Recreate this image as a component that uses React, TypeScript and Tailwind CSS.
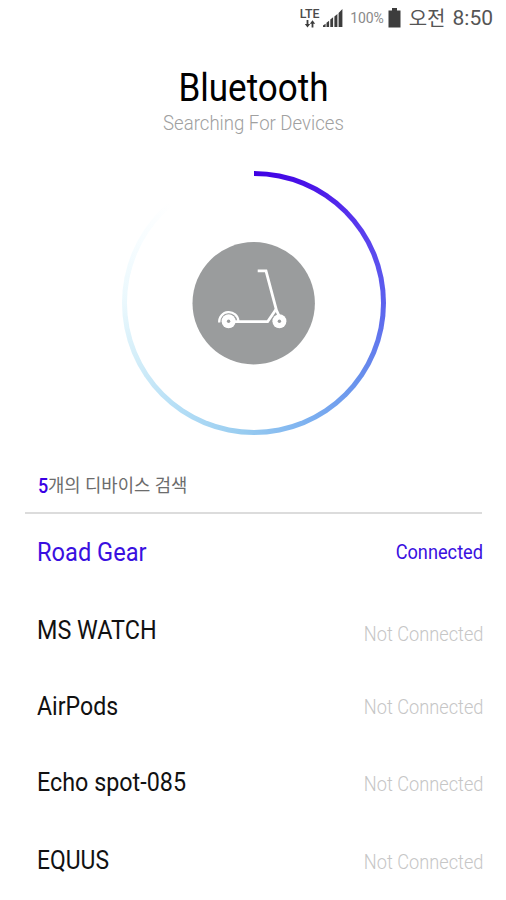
type Device = { name: string; connected: boolean; nameClass: string; statusClass: string };

const devices: Device[] = [
  { name: "Road Gear", connected: true, nameClass: "scale-x-[0.945]", statusClass: "pb-px" },
  { name: "MS WATCH", connected: false, nameClass: "pt-[2px] scale-x-[0.935]", statusClass: "pt-[8px]" },
  { name: "AirPods", connected: false, nameClass: "pt-[1px] scale-x-[0.925]", statusClass: "pt-px" },
  { name: "Echo spot-085", connected: false, nameClass: "pb-[2px] scale-x-[0.933]", statusClass: "pt-px" },
  { name: "EQUUS", connected: false, nameClass: "scale-x-[0.915]", statusClass: "pt-[2px]" },
];

function StatusBar() {
  return (
    <header className="flex h-9 items-center justify-end pr-3 text-[#4a4a4a]">
      <div className="mr-[2px] flex w-[21px] flex-col items-center">
        <span className="scale-x-[1.03] text-[12px] leading-[11px] font-medium">LTE</span>
        <svg className="h-[8px] w-[12px]" viewBox="0 0 12 8" fill="#3c3c3c">
          <path d="M2.6 0h1.8v4h1.8L3.5 7.5.8 4h1.8zM7.6 7.5h1.8V3.7h1.8L8.5.2 5.8 3.7h1.8z" />
        </svg>
      </div>
      <svg className="ml-[1px] h-[20px] w-[20px]" viewBox="0 0 20 20" fill="#3c3c3c">
        <path d="M0 19v-1.5l2.6-1.8V19zM3.5 19v-4.2l2.6-2V19zM7.3 19v-7.4l2.8-2.4V19zM11.4 19V8.4L14.4 6v13zM15.6 19V5l3.8-4v18z" />
      </svg>
      <span className="ml-[7px] text-[14px] tracking-[-0.1px] text-[#8a8a8a]">100%</span>
      <svg className="ml-[4px] h-[20px] w-[13px]" viewBox="0 0 13 20" fill="#3d3d3d">
        <path d="M4 0h5v2.5h3.5V19.5H.5V2.5H4z" />
      </svg>
      <span className="ml-[8px] pt-px text-[20px] leading-6 text-[#555]">오전</span>
      <span className="mr-px ml-[7px] text-[21px] leading-6 text-[#555]">8:50</span>
    </header>
  );
}

function ScooterIcon() {
  return (
    <svg className="-ml-[1px] h-[123px] w-[123px]" viewBox="0 0 123 123" fill="none">
      <circle cx="61.7" cy="61.2" r="61.2" fill="#9a9c9d" />
      <g transform="translate(0.4 -0.5)">
        <g stroke="#fff" strokeWidth="2.8">
          <path d="M65.3 29.3h8.3L84 68.5l3.4 7.5" />
          <path d="M38 80.2h37.2L83.5 68" />
          <path d="M26.8 81A9.6 9.6 0 0 1 46 79.5" strokeWidth="2.3" />
        </g>
        <circle cx="36.2" cy="79.8" r="7" fill="#fff" />
        <circle cx="36.2" cy="79.8" r="1.7" fill="#9a9c9d" />
        <circle cx="87" cy="79.8" r="7" fill="#fff" />
        <circle cx="87" cy="79.8" r="1.7" fill="#9a9c9d" />
      </g>
    </svg>
  );
}

function SearchRing() {
  return (
    <div className="mt-[34px] ml-[122px] size-[264px] rounded-full bg-[conic-gradient(#3f00e4_0deg,#4a14e8_25deg,#5a3cee_55deg,#5c62ee_90deg,#6890ec_125deg,#7cb0f0_155deg,#98ccf0_185deg,#b4def6_215deg,#d4eef9_245deg,#eaf8fd_270deg,#f8fdff_300deg,#ffffff_320deg,#ffffff_360deg)] p-[5px]">
      <div className="flex size-full items-center justify-center rounded-full bg-white">
        <ScooterIcon />
      </div>
    </div>
  );
}

export default function App() {
  return (
    <main className="h-[900px] w-[506px] overflow-hidden bg-white font-[Roboto,'Noto_Sans_CJK_KR',sans-serif]">
      <StatusBar />
      <div className="pt-[30px] text-center">
        <h1 className="scale-x-[0.922] pl-px text-[38px] leading-[44px] text-black">Bluetooth</h1>
        <p className="scale-x-[0.93] pb-px pl-px text-[20px] leading-[26px] font-light text-[#a0a0a0]">Searching For Devices</p>
      </div>
      <SearchRing />
      <p className="mt-[38px] ml-[37.5px] flex h-[26px] items-center text-[18px] leading-[26px]">
        <span className="w-[10px]"><span className="inline-block origin-left scale-x-[0.9] text-[20px] font-medium text-[#3a00e4]">5</span></span>
        <span className="origin-left scale-x-[0.985] text-[#6c6c6c]">개의 디바이스 검색</span>
      </p>
      <ul className="mt-[13px] mr-6 ml-[25px] border-t-2 border-[#dcdcdc]">
        {devices.map((d) => (
          <li key={d.name} className="flex h-[77px] items-center justify-between pl-[12px] leading-[30px]">
            <span className={`origin-left text-[25px] ${d.nameClass} ${d.connected ? "text-[#3a10e0]" : "text-[#111]"}`}>{d.name}</span>
            <span className={`-mr-[1.5px] origin-right scale-x-[0.91] text-[20px] ${d.statusClass} ${d.connected ? "text-[#3a10e0]" : "font-light text-[#c6c6c6]"}`}>
              {d.connected ? "Connected" : "Not Connected"}
            </span>
          </li>
        ))}
      </ul>
    </main>
  );
}
